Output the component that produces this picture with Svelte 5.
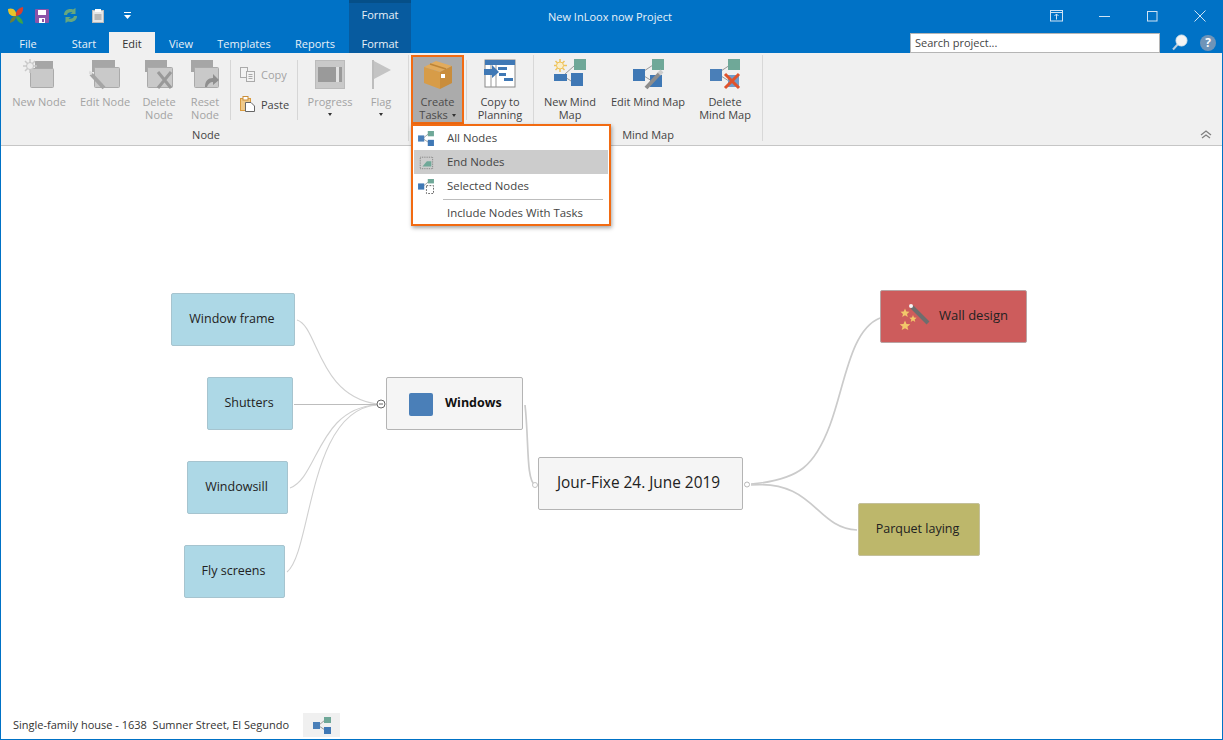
<script>
  const nodes = [
    { label: 'Window frame', x: 171, y: 293, w: 124, kind: 'blue' },
    { label: 'Shutters', x: 207, y: 377, w: 86, kind: 'blue' },
    { label: 'Windowsill', x: 187, y: 461, w: 101, kind: 'blue' },
    { label: 'Fly screens', x: 184, y: 545, w: 101, kind: 'blue' },
    { label: 'Windows', x: 386, y: 377, w: 137, kind: 'grey main', icon: 'square' },
    { label: 'Jour-Fixe 24. June 2019', x: 538, y: 457, w: 205, kind: 'grey root' },
    { label: 'Wall design', x: 880, y: 290, w: 147, kind: 'red', icon: 'wand' },
    { label: 'Parquet laying', x: 858, y: 503, w: 122, kind: 'khaki' }
  ];
  const canvasTop = 146;
  const thin = [
    'M297 320C318 326 318 396 377 404',
    'M290 488C318 478 318 408 377 405',
    'M287 572C312 552 308 410 377 405'
  ];
  const thick = [
    'M525 405C529 440 526 480 535 485',
    'M751 484C800 480 815 465 830 425C845 385 850 330 880 318',
    'M751 485C815 480 815 528 857 530'
  ];
</script>

{#snippet tree(w, h)}
  <svg width={w} height={h} viewBox="0 0 18 17">
    <path d="M6 8L12 3M6 9L12 13" stroke="#999" stroke-width="1" fill="none" />
    <rect x="0" y="5" width="7" height="7" fill="#4a7fb8" />
    <rect x="11" y="0" width="7" height="6" fill="#6fa898" />
    <rect x="11" y="10" width="7" height="7" fill="#3f78b5" />
  </svg>
{/snippet}

<div class="app">
  <header class="titlebar">
    <div class="qat">
      <svg class="q1" width="16" height="17" viewBox="0 0 16 17">
        <path d="M0 2C5 0 9 4 8 9C3 10 0 7 0 2Z" fill="#e8c52a" />
        <path d="M15 0C16 5 12 9 8 9C7 5 10 1 15 0Z" fill="#d8402f" />
        <path d="M8 9C11 9 15 12 15 17C11 16 8 13 8 9Z" fill="#3ca34a" />
        <path d="M8 9C5 9 2 12 2 16C5 15 8 13 8 9Z" fill="#6b7f3a" />
      </svg>
      <svg class="q2" width="14" height="14" viewBox="0 0 14 14">
        <rect width="14" height="14" rx="1" fill="#8c54a8" />
        <rect x="3" y="1" width="8" height="5" fill="#fff" />
        <rect x="4" y="9" width="6" height="5" fill="#fff" />
        <rect x="7" y="10" width="2" height="3" fill="#8c54a8" />
      </svg>
      <svg class="q3" width="15" height="15" viewBox="0 0 15 15">
        <path d="M1 7C1 2 6 0 10 1.500L12.500 0V6H7L9.500 4.500C7 3.500 4 5 4 7Z" fill="#67a77e" />
        <path d="M14 8C14 13 9 15 5 13.500L2.500 15V9H8L5.500 10.500C8 11.500 11 10 11 8Z" fill="#67a77e" />
      </svg>
      <svg class="q4" width="12" height="14" viewBox="0 0 12 14">
        <rect x="0.500" y="1.500" width="11" height="12" fill="#e6e6e6" stroke="#bbb" />
        <rect x="3" y="0" width="6" height="3" fill="#fff" />
        <path d="M2.500 6H9.500M2.500 8H9.500M2.500 10H9.500" stroke="#888" />
      </svg>
      <svg class="q5" width="7" height="7" viewBox="0 0 7 7">
        <rect x="0" y="0" width="7" height="1" fill="#fff" />
        <path d="M0 3H7L3.500 7Z" fill="#fff" />
      </svg>
    </div>
    <div class="ctx ctx-top">Format</div>
    <div class="caption">
      <span class="doc-title">New InLoox now Project</span>
      <div class="winbtns">
        <svg class="w0" width="14" height="12" viewBox="0 0 14 12" fill="none" stroke="#cfe3f4"><rect x="0.500" y="0.500" width="12" height="10.500" /><path d="M0.500 2.500H12.500M6.500 9.500V4M4.500 6L6.500 4L8.500 6" /></svg>
        <svg class="w1" width="12" height="12" viewBox="0 0 12 12" stroke="#cfe3f4"><path d="M0 6.500H11" /></svg>
        <svg class="w2" width="11" height="11" viewBox="0 0 11 11" fill="none" stroke="#cfe3f4"><rect x="0.500" y="0.500" width="9.500" height="9.500" /></svg>
        <svg class="w3" width="12" height="12" viewBox="0 0 12 12" stroke="#cfe3f4"><path d="M0.500 0.500L11.500 11.500M11.500 0.500L0.500 11.500" /></svg>
      </div>
    </div>
    <nav class="tabs">
      <span class="tab file">File</span>
      <span class="tab start">Start</span>
      <span class="tab active">Edit</span>
      <span class="tab view">View</span>
      <span class="tab templates">Templates</span>
      <span class="tab reports">Reports</span>
    </nav>
    <div class="ctx ctx-bottom">Format</div>
    <div class="searchrow">
      <div class="search">Search project...</div>
      <svg class="mag" width="17" height="17" viewBox="0 0 17 17">
        <path d="M7 10L2 15.500" stroke="#b9cfe0" stroke-width="2" />
        <circle cx="10.500" cy="6.500" r="5.500" fill="#f4f4f4" stroke="#dfe8ee" />
      </svg>
      <span class="help">?</span>
    </div>
  </header>

  <section class="ribbon">
    <div class="group g-node">
      <div class="cmds">
        <div class="btn off w70">
          <svg width="32" height="32" viewBox="0 0 32 32">
            <rect x="12" y="2" width="18" height="12" fill="#a6a6a6" />
            <rect x="7.500" y="9.500" width="23" height="19" rx="1" fill="#c9c9c9" stroke="#aaa" />
            <g stroke="#c9c9c9" stroke-width="1.500"><path d="M7 0V14M0 7H14M2 2L12 12M12 2L2 12" /></g>
            <circle cx="7" cy="7" r="3.500" fill="#ececec" stroke="#c4c4c4" />
          </svg>
          <span>New Node</span>
        </div>
        <div class="btn off w62">
          <svg width="32" height="32" viewBox="0 0 32 32">
            <rect x="3" y="1" width="23" height="12" fill="#a6a6a6" />
            <rect x="5.500" y="8.500" width="25" height="20" rx="1" fill="#c9c9c9" stroke="#aaa" />
            <path d="M2 15L15 29" stroke="#a5a5a5" stroke-width="4" />
            <path d="M0 13L3 15" stroke="#ddd" stroke-width="3" />
          </svg>
          <span>Edit Node</span>
        </div>
        <div class="btn off w46">
          <svg width="32" height="32" viewBox="0 0 32 32">
            <rect x="2" y="1" width="22" height="12" fill="#a6a6a6" />
            <rect x="4.500" y="8.500" width="25" height="20" rx="1" fill="#c9c9c9" stroke="#aaa" />
            <path d="M15 13L28 29M28 13L15 29" stroke="#999" stroke-width="3" />
          </svg>
          <span>Delete<br />Node</span>
        </div>
        <div class="btn off w46">
          <svg width="32" height="32" viewBox="0 0 32 32">
            <rect x="2" y="1" width="22" height="12" fill="#a6a6a6" />
            <rect x="5.500" y="8.500" width="24" height="20" rx="1" fill="#c9c9c9" stroke="#aaa" />
            <path d="M16 28C16 22 19 19 24 19V15L30 21L24 26V23C21 23 19 25 18 28Z" fill="#8f8f8f" />
          </svg>
          <span>Reset<br />Node</span>
        </div>
        <div class="sep s-a"></div>
        <div class="small">
          <div class="sm off">
            <svg width="15" height="15" viewBox="0 0 15 15" fill="#f2f2f2" stroke="#aaa"><rect x="0.500" y="0.500" width="7" height="10" /><rect x="6.500" y="4.500" width="8" height="10" /><path d="M8.500 7.500H12.500M8.500 9.500H12.500M8.500 11.500H12.500" /></svg>
            <span>Copy</span>
          </div>
          <div class="sm">
            <svg width="15" height="16" viewBox="0 0 15 16">
              <rect x="0.500" y="2.500" width="10" height="12" fill="#efc98a" stroke="#d99b3f" />
              <rect x="3" y="0.500" width="5" height="3.500" fill="#fff" stroke="#c98e3a" />
              <path d="M5.500 6.500H11L14.500 10V15.500H5.500Z" fill="#fff" stroke="#666" />
            </svg>
            <span>Paste</span>
          </div>
        </div>
        <div class="sep s-c"></div>
        <div class="btn off w64">
          <svg width="30" height="30" viewBox="0 0 30 30">
            <rect x="0.500" y="0.500" width="29" height="28" fill="#c9c9c9" stroke="#bbb" />
            <rect x="3" y="7" width="24" height="15" fill="#9a9a9a" />
            <rect x="21" y="7" width="3" height="15" fill="#e2e2e2" />
          </svg>
          <span>Progress</span>
          <i class="drop"></i>
        </div>
        <div class="btn off w38">
          <svg width="22" height="30" viewBox="0 0 22 30">
            <rect x="2" y="0" width="2" height="29" fill="#bdbdbd" />
            <path d="M4 1L21 10L4 19Z" fill="#c4c4c4" />
          </svg>
          <span>Flag</span>
          <i class="drop"></i>
        </div>
      </div>
      <div class="glabel">Node</div>
    </div>

    <div class="group g-tasks">
      <div class="cmds">
        <div class="btn create">
          <svg width="32" height="32" viewBox="0 0 32 32">
            <path d="M2 8L14 2L30 7L18 13Z" fill="#e2ab5c" />
            <path d="M2 8L18 13V30L2 24Z" fill="#d79c48" />
            <path d="M18 13L30 7V24L18 30Z" fill="#c98d3c" />
            <path d="M8 5L24 10" stroke="#bd8436" stroke-width="1.500" />
            <rect x="19" y="15" width="4" height="4" fill="#fff" />
          </svg>
          <span>Create<br />Tasks <i class="drop inline"></i></span>
        </div>
        <div class="sep s-b"></div>
        <div class="btn w66">
          <svg width="32" height="32" viewBox="0 0 32 32">
            <rect x="1" y="1" width="30" height="27" fill="#fff" stroke="#888" />
            <rect x="1" y="1" width="30" height="5" fill="#3f78b5" />
            <path d="M7 6V28M12 6V28" stroke="#999" />
            <rect x="14" y="8" width="9" height="3" fill="#3f78b5" />
            <rect x="15" y="14" width="7" height="3" fill="#3f78b5" />
            <rect x="20" y="19" width="9" height="3" fill="#3f78b5" />
            <path d="M0 10H8V6L15 13L8 19V16H0Z" fill="#3f78b5" />
          </svg>
          <span>Copy to<br />Planning</span>
        </div>
      </div>
    </div>

    <div class="group g-map">
      <div class="cmds">
        <div class="btn w72">
          <svg width="32" height="32" viewBox="0 0 32 32">
            <path d="M11 15L20 7M11 18L20 24" stroke="#999" />
            <g stroke="#eec35b" stroke-width="1.500"><path d="M6 0V13M0 6.500H13M1.500 2L10.500 11M10.500 2L1.500 11" /></g>
            <circle cx="6" cy="6.500" r="3.500" fill="#fbeec8" stroke="#eec35b" />
            <rect x="20" y="0" width="12" height="11" fill="#6fa898" />
            <rect x="0" y="15" width="13" height="7" fill="#3f78b5" />
            <rect x="17" y="14" width="12" height="13" fill="#3f78b5" />
          </svg>
          <span>New Mind<br />Map</span>
        </div>
        <div class="btn w84">
          <svg width="32" height="32" viewBox="0 0 32 32">
            <path d="M12 12L21 6M12 17L20 22" stroke="#999" />
            <rect x="20" y="0" width="12" height="11" fill="#6fa898" />
            <rect x="1" y="10" width="12" height="12" fill="#3f78b5" />
            <rect x="18" y="16" width="12" height="12" fill="#3f78b5" />
            <path d="M14 29L28 14" stroke="#8d8d8d" stroke-width="4" />
            <path d="M27 15L30 12" stroke="#ccc" stroke-width="4" />
          </svg>
          <span>Edit Mind Map</span>
        </div>
        <div class="btn w70b">
          <svg width="32" height="32" viewBox="0 0 32 32">
            <path d="M12 12L21 6M12 17L20 22" stroke="#999" />
            <rect x="19" y="0" width="12" height="11" fill="#6fa898" />
            <rect x="1" y="10" width="12" height="12" fill="#4a7fb8" />
            <rect x="19" y="16" width="11" height="12" fill="#6f9ccb" />
            <path d="M16 15L30 29M30 15L16 29" stroke="#e0532c" stroke-width="3" />
          </svg>
          <span>Delete<br />Mind Map</span>
        </div>
      </div>
      <div class="glabel">Mind Map</div>
    </div>

    <svg class="collapse" width="12" height="9" viewBox="0 0 12 9" fill="none" stroke="#808080" stroke-width="1.300"><path d="M1 5L6 1L11 5M2 8L6 5L10 8" /></svg>
  </section>

  <main class="canvas">
    <svg class="wires" width="1221" height="570" viewBox={`0 ${canvasTop} 1221 570`} fill="none">
      {#each thin as d}<path {d} stroke="#d0d0d0" stroke-width="1.100" />{/each}
      <path d="M294 404.500H377" stroke="#bdbdbd" stroke-width="1" />
      {#each thick as d}<path {d} stroke="#cbcbcb" stroke-width="1.700" />{/each}
      <circle cx="381" cy="404" r="4" fill="#fff" stroke="#666" />
      <path d="M379 404H383" stroke="#666" />
      <circle cx="535" cy="485" r="2.500" fill="#fff" stroke="#c4c4c4" />
      <circle cx="747" cy="484.500" r="2.500" fill="#fff" stroke="#b8b8b8" />
    </svg>
    {#each nodes as n}
      <div class="node {n.kind}" style="left:{n.x - 1}px;top:{n.y - canvasTop}px;width:{n.w}px">
        {#if n.icon === 'square'}<span class="sq"></span>{/if}
        {#if n.icon === 'wand'}
          <svg width="33" height="30" viewBox="0 0 33 30">
            <path d="M15 7L31 23" stroke="#6d6d6d" stroke-width="4" />
            <circle cx="14" cy="6" r="2" fill="#f5f5f5" />
            <g fill="#f2c76a">
              <polygon points="8,8.500 9.300,11.500 12.500,11.800 10,13.900 10.800,17 8,15.300 5.200,17 6,13.900 3.500,11.800 6.700,11.500" />
              <polygon points="16,15 17,17.500 19.700,17.700 17.600,19.500 18.300,22 16,20.600 13.700,22 14.400,19.500 12.300,17.700 15,17.500" />
              <polygon points="8,20.500 9.500,24 13.300,24.300 10.400,26.800 11.300,30 8,28.300 4.700,30 5.600,26.800 2.700,24.300 6.500,24" />
            </g>
          </svg>
        {/if}
        <span>{n.label}</span>
      </div>
    {/each}
  </main>

  <footer class="status">
    <span>Single-family house - 1638&nbsp; Sumner Street, El Segundo</span>
    <div class="statusbtn">{@render tree(18, 17)}</div>
  </footer>

  <div class="menu">
    <div class="mi">{@render tree(16, 15)}<span>All Nodes</span></div>
    <div class="mi hot">
      <svg width="16" height="15" viewBox="0 0 18 17">
        <rect x="2.500" y="2.500" width="14" height="13" fill="none" stroke="#777" stroke-dasharray="1 1" />
        <path d="M5 13L10 7H15V13Z" fill="#6fa898" />
      </svg>
      <span>End Nodes</span>
    </div>
    <div class="mi">
      <svg width="16" height="15" viewBox="0 0 18 17">
        <path d="M6 8L12 3" stroke="#999" />
        <rect x="0" y="5" width="7" height="7" fill="#3f78b5" />
        <rect x="11" y="0" width="7" height="5" fill="#6fa898" />
        <rect x="9.500" y="7.500" width="8" height="9" fill="none" stroke="#555" stroke-dasharray="2 1.500" />
      </svg>
      <span>Selected Nodes</span>
    </div>
    <div class="mdiv"></div>
    <div class="mi plain"><span>Include Nodes With Tasks</span></div>
  </div>
</div>

<style>
  :global(body) {
    margin: 0;
    background: #fff;
  }
  .app {
    position: relative;
    box-sizing: border-box;
    width: 1223px;
    height: 740px;
    display: flex;
    flex-direction: column;
    border: solid #0072c6;
    border-width: 0 1px 1px;
    font-family: "Open Sans", "Noto Sans", sans-serif;
    font-size: 11px;
    color: #444;
    overflow: hidden;
  }
  .titlebar {
    flex: none;
    display: grid;
    grid-template-columns: 348px 62px 1fr;
    grid-template-rows: 32px 21px;
    background: #0072c6;
    color: #fff;
    margin: 0;
  }
  .qat {
    position: relative;
    display: flex;
    align-items: center;
    padding: 0 0 1px 7px;
  }
  .q2 { margin-left: 11px; }
  .q3 { margin-left: 14px; }
  .q4 { margin-left: 14px; }
  .q5 { margin-left: 20px; }
  .ctx {
    background: #075b9f;
    text-align: center;
    color: #e8f1f8;
  }
  .ctx-top {
    border-top: 3px solid #054f88;
    line-height: 23px;
  }
  .ctx-bottom {
    line-height: 24px;
  }
  .caption {
    display: flex;
    align-items: center;
    padding-left: 137px;
    color: #e8f1f8;
  }
  .doc-title { white-space: nowrap; }
  .winbtns {
    margin-left: auto;
    display: flex;
    align-items: center;
    padding-right: 16px;
  }
  .w1 { margin-left: 35px; }
  .w2 { margin-left: 36px; }
  .w3 { margin-left: 36px; }
  .tabs {
    display: flex;
  }
  .tab {
    text-align: center;
    line-height: 24px;
    color: #e8f1f8;
    height: 21px;
  }
  .file { width: 54px; }
  .start { width: 54px; padding-left: 4px; box-sizing: border-box; }
  .active {
    width: 46px;
    background: #f0f0f0;
    color: #333;
  }
  .view { width: 52px; }
  .templates { width: 74px; }
  .reports { width: 68px; }
  .searchrow {
    display: flex;
    align-items: center;
    padding-left: 499px;
  }
  .search {
    box-sizing: border-box;
    width: 250px;
    height: 20px;
    background: #fff;
    border: 1px solid #b5b5b5;
    color: #444;
    line-height: 18px;
    padding-left: 4px;
    margin-top: 1px;
  }
  .mag { margin-left: 11px; }
  .help {
    margin-left: 12px;
    width: 16px;
    height: 16px;
    border-radius: 50%;
    background: #6f94b8;
    color: #fff;
    font-weight: 700;
    font-size: 12px;
    line-height: 16px;
    text-align: center;
  }
  .ribbon {
    flex: none;
    box-sizing: border-box;
    height: 93px;
    display: flex;
    background: #f0f0f0;
    border-bottom: 1px solid #c6c6c6;
    padding-top: 2px;
  }
  .group {
    display: flex;
    flex-direction: column;
    box-sizing: border-box;
    height: 86px;
    border-right: 1px solid #d8d8d8;
    position: relative;
  }
  .g-node { width: 408px; padding-left: 3px; }
  .g-tasks { width: 125px; padding-left: 2px; }
  .g-map { width: 229px; }
  .cmds {
    display: flex;
    height: 69px;
  }
  .btn {
    flex: none;
    box-sizing: border-box;
    display: flex;
    flex-direction: column;
    align-items: center;
    padding-top: 4px;
    line-height: 13px;
    text-align: center;
    color: #444;
    white-space: nowrap;
  }
  .btn svg {
    height: 32px;
    flex: none;
    margin-bottom: 4px;
  }
  .off { color: #a3a3a3; }
  .w70 { width: 70px; }
  .w62 { width: 62px; }
  .w46 { width: 46px; }
  .w64 { width: 64px; }
  .w38 { width: 38px; }
  .w66 { width: 66px; }
  .w72 { width: 72px; }
  .w84 { width: 84px; }
  .w70b { width: 70px; }
  .create {
    width: 53px;
    background: #ababab;
    border: 2px solid #f26b12;
    padding-top: 2px;
    color: #4a4a4a;
  }
  .drop {
    display: block;
    width: 0;
    height: 0;
    margin-top: 5px;
    border: 2.500px solid transparent;
    border-top: 3px solid #333;
    border-bottom: 0;
  }
  .drop.inline {
    display: inline-block;
    margin: 0 0 2px 1px;
    vertical-align: middle;
  }
  .sep {
    flex: none;
    width: 1px;
    height: 60px;
    margin: 5px 2px 0;
    background: #d6d6d6;
  }
  .s-b { margin: 5px 0 0 2px; }
  .s-c { margin: 5px 0 0 1px; }
  .small {
    flex: none;
    width: 63px;
    padding-top: 4px;
    padding-left: 7px;
    box-sizing: border-box;
  }
  .sm {
    display: flex;
    align-items: center;
    gap: 6px;
    height: 30px;
    color: #444;
  }
  .sm.off { color: #a3a3a3; }
  .glabel {
    text-align: center;
    line-height: 13px;
    margin-top: 7px;
    color: #444;
  }
  .collapse {
    align-self: flex-end;
    margin: 0 0 6px auto;
    margin-right: 10px;
  }
  .canvas {
    flex: 1;
    position: relative;
    background: #fff;
  }
  .wires {
    position: absolute;
    left: -1px;
    top: 0;
  }
  .node {
    position: absolute;
    box-sizing: border-box;
    height: 53px;
    display: flex;
    align-items: center;
    justify-content: center;
    gap: 8px;
    padding-bottom: 3px;
    border-radius: 2px;
    border: 1px solid #b4b4b4;
    font-size: 12.500px;
    color: #222;
    white-space: nowrap;
  }
  .blue { background: #add8e6; border-color: #a6c4cf; padding-right: 2px; }
  .grey { background: #f5f5f5; }
  .red {
    background: #cd5c5c;
    border-color: #b9a3a3;
    justify-content: flex-start;
    padding-left: 16px;
    gap: 9px;
    font-size: 13px;
  }
  .khaki { background: #bdb76b; border-color: #c4c09a; padding-right: 3px; }
  .main {
    font-weight: 700;
    color: #111;
    justify-content: flex-start;
    padding-left: 22px;
    gap: 12px;
  }
  .root { font-size: 15.400px; padding-right: 4px; }
  .sq {
    width: 24px;
    height: 23px;
    background: #4a7fb8;
    border-radius: 2px;
    margin-top: 4px;
  }
  .status {
    flex: none;
    height: 26px;
    display: flex;
    align-items: center;
    padding: 0 0 2px 12px;
    box-sizing: border-box;
    color: #333;
    background: #fff;
  }
  .status > span { width: 290px; white-space: nowrap; margin-top: -2px; }
  .statusbtn {
    width: 37px;
    height: 24px;
    background: #f0f0f0;
    display: flex;
    align-items: center;
    justify-content: center;
  }
  .menu {
    position: absolute;
    left: 410px;
    top: 124px;
    box-sizing: border-box;
    width: 200px;
    height: 102px;
    background: #fff;
    border: 2px solid #f26b12;
    padding: 0 1px;
    box-shadow: 1px 2px 4px rgba(0, 0, 0, 0.35);
    color: #444;
    font-size: 11.400px;
  }
  .mi {
    display: flex;
    align-items: center;
    height: 24px;
    padding-left: 4px;
    gap: 13px;
  }
  .mi span { margin-top: -1px; }
  .hot { background: #cccccc; }
  .plain { padding-left: 33px; height: 25px; }
  .mdiv {
    height: 1px;
    margin: 1px 5px 0 29px;
    background: #bdbdbd;
  }
</style>
